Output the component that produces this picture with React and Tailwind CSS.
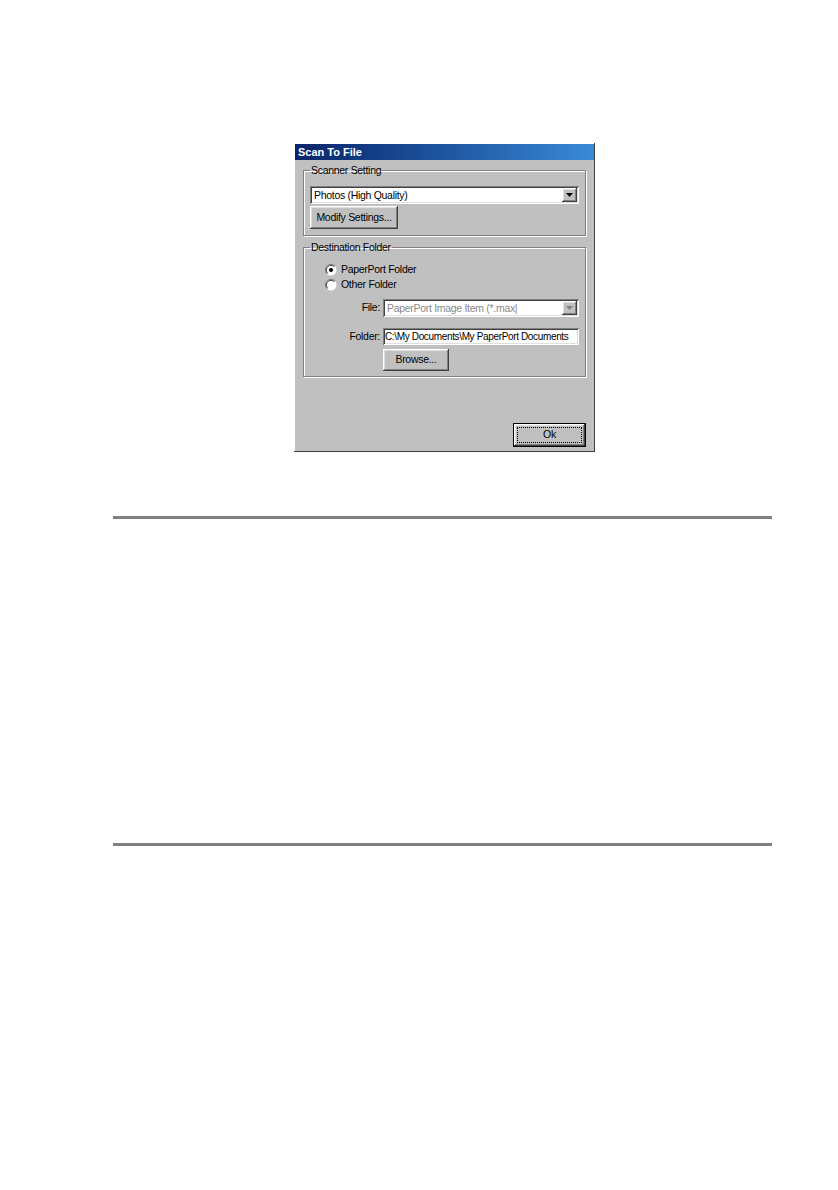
// App.jsx — "Scan To File" dialog on a manual page
const FONT = { fontFamily: '"Liberation Sans", Arial, sans-serif' };

const raised =
  "shadow-[inset_-1px_-1px_0_#404040,inset_1px_1px_0_#ffffff,inset_-2px_-2px_0_#808080,inset_2px_2px_0_#dfdfdf]";
const sunken =
  "shadow-[inset_1px_1px_0_#808080,inset_-1px_-1px_0_#ffffff,inset_2px_2px_0_#404040,inset_-2px_-2px_0_#dfdfdf]";
const txt = "text-[10.5px] tracking-[-0.3px]";

function Arrow({ disabled }) {
  return (
    <svg width="7" height="4" viewBox="0 0 7 4">
      <path d="M0 0h7L3.5 4z" fill={disabled ? "#808080" : "#000"} />
    </svg>
  );
}

function Select({ text, disabled }) {
  return (
    <div className={`flex h-[18px] items-stretch bg-white p-[2px] ${sunken}`}>
      <div className={`flex-1 overflow-hidden whitespace-nowrap pl-[2px] leading-[14px] ${txt} ${disabled ? "text-[#8a8a8a]" : "text-black"}`}>
        {text}
      </div>
      <div className={`flex w-[15px] items-center justify-center bg-[#c0c0c0] ${raised}`}>
        <Arrow disabled={disabled} />
      </div>
    </div>
  );
}

function Button({ label, className = "" }) {
  return (
    <div className={`flex items-center justify-center bg-[#c0c0c0] text-black ${txt} ${raised} ${className}`}>
      {label}
    </div>
  );
}

function Radio({ checked, label }) {
  return (
    <div className="flex h-[15px] items-center gap-[4px]">
      <svg width="12" height="12" viewBox="0 0 12 12">
        <circle cx="6" cy="6" r="5.5" fill="#ffffff" />
        <path d="M10 2A5.5 5.5 0 0 0 2 10" stroke="#808080" strokeWidth="1" fill="none" />
        <path d="M9.3 2.7A4.5 4.5 0 0 0 2.7 9.3" stroke="#404040" strokeWidth="1" fill="none" />
        {checked && <circle cx="6" cy="6" r="2" fill="#000" />}
      </svg>
      <span className={`text-black ${txt}`}>{label}</span>
    </div>
  );
}

function Group({ title, className = "", children }) {
  return (
    <fieldset
      className={`mx-[8px] min-w-0 border border-[#808080] px-[6px] shadow-[inset_1px_1px_0_#ffffff,1px_1px_0_#ffffff] ${className}`}
    >
      <legend className={`px-[1px] leading-[13px] text-black ${txt}`}>{title}</legend>
      {children}
    </fieldset>
  );
}

export default function App() {
  return (
    <div className="min-h-[1190px] w-[838px] bg-white pt-[143px]" style={FONT}>
      <div className="ml-[294px] flex h-[309px] w-[301px] flex-col bg-[#c0c0c0] p-[1px] shadow-[inset_-1px_-1px_0_#404040,inset_1px_1px_0_#ffffff]">
        <div className="flex h-[16px] items-center bg-gradient-to-r from-[#0a246a] to-[#3a8ad8] pl-[3px]">
          <span className="text-[11px] font-bold text-white">Scan To File</span>
        </div>

        <Group title="Scanner Setting" className="mt-[4px] h-[72px]">
          <div className="mt-[9px]">
            <Select text="Photos (High Quality)" />
          </div>
          <Button label="Modify Settings..." className="mt-[2px] h-[23px] w-[88px]" />
        </Group>

        <Group title="Destination Folder" className="mt-[5px] h-[136px]">
          <div className="ml-[15px] mt-[8px] flex flex-col">
            <Radio checked label="PaperPort Folder" />
            <Radio label="Other Folder" />
          </div>
          <div className="mt-[7px] flex items-center">
            <span className={`w-[73px] pr-[3px] text-right text-black ${txt}`}>File:</span>
            <div className="min-w-0 flex-1">
              <Select text="PaperPort Image Item (*.max|" disabled />
            </div>
          </div>
          <div className="mt-[11px] flex items-center">
            <span className={`w-[73px] pr-[3px] text-right text-black ${txt}`}>Folder:</span>
            <div className="flex h-[17px] min-w-0 flex-1 items-center whitespace-nowrap bg-white px-[2px] text-[10px] tracking-[-0.35px] text-black shadow-[inset_1px_1px_0_#808080,inset_-1px_-1px_0_#ffffff,inset_2px_2px_0_#404040,inset_-2px_-2px_0_#dfdfdf]">
              C:\My Documents\My PaperPort Documents
            </div>
          </div>
          <Button label="Browse..." className="ml-[73px] mt-[4px] h-[22px] w-[66px]" />
        </Group>

        <div className="mt-auto mb-[4px] mr-[8px] flex justify-end">
          <div className="h-[24px] w-[73px] border border-black">
            <div className={`flex h-full w-full items-center justify-center bg-[#c0c0c0] p-[3px] ${raised}`}>
              <div className={`flex h-full w-full items-center justify-center border border-dotted border-black text-black ${txt}`}>
                Ok
              </div>
            </div>
          </div>
        </div>
      </div>

      <div className="ml-[113px] mt-[64px] h-[3px] w-[659px] bg-[#808080]" />
      <div className="ml-[113px] mt-[324px] h-[3px] w-[659px] bg-[#808080]" />
    </div>
  );
}
